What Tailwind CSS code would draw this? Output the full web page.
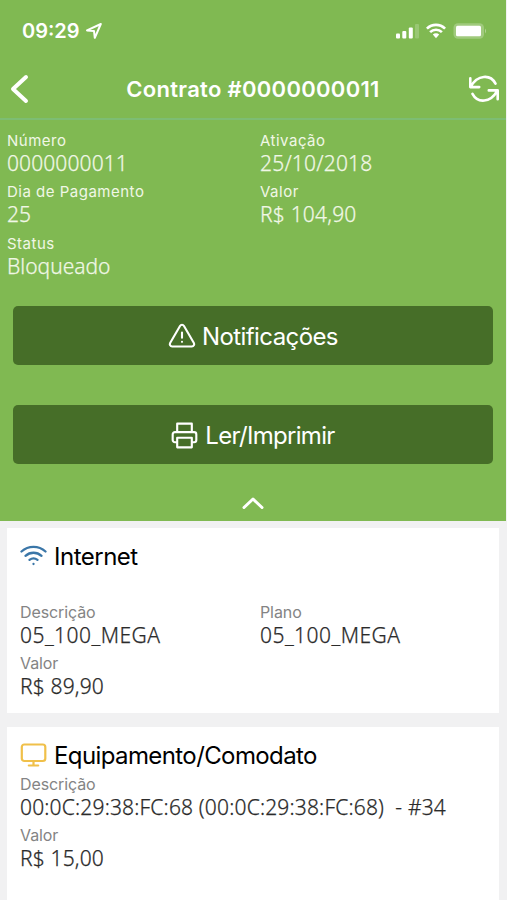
<!DOCTYPE html>
<html lang="pt-BR">
<head>
    <meta charset="UTF-8">
    <meta name="viewport" content="width=device-width, initial-scale=1.0">
    <title>Contrato #0000000011</title>
    <script src="https://cdn.jsdelivr.net/npm/@tailwindcss/browser@4"></script>
</head>
<body class="bg-[#f1f1f2] h-screen overflow-hidden flex flex-col font-['Inter','Liberation_Sans',sans-serif] whitespace-nowrap">
    <div class="bg-[#80b952] text-white w-[506px] h-[521px] shrink-0 flex flex-col">
        <!-- Status bar -->
        <div class="h-[60px] pt-0.5 pl-[22px] pr-[19px] flex items-center justify-between">
            <div class="flex items-center gap-1.5">
                <span class="text-[20px] font-semibold">09:29</span>
                <svg class="w-4 h-4" viewBox="0 0 16 16" fill="none" stroke="currentColor" stroke-width="2" stroke-linejoin="round"><path d="M1 7.4 14.8 1 8.8 14.8 8 8z"/></svg>
            </div>
            <div class="flex items-center gap-[7px]">
                <svg class="w-[23px] h-4" viewBox="0 0 23 16" fill="currentColor">
                    <rect x="0" y="10.5" width="4" height="5" rx="1"/>
                    <rect x="6.3" y="8" width="4" height="7.5" rx="1"/>
                    <rect x="12.8" y="4.5" width="4" height="11" rx="1"/>
                    <rect x="19" y="1" width="4" height="14.5" rx="1" opacity=".2"/>
                </svg>
                <svg class="w-5 h-4" viewBox="0 0 20 16" fill="none" stroke="currentColor" stroke-width="2.6">
                    <path d="M.9 5.6a13 13 0 0 1 18.2 0M4.1 9.1a8.4 8.4 0 0 1 11.8 0"/>
                    <path d="M6.8 11.6a4.6 4.6 0 0 1 6.4 0L10 15.2z" fill="currentColor" stroke="none"/>
                </svg>
                <svg class="w-[34px] h-4" viewBox="0 0 34 16" fill="currentColor">
                    <rect x="0.5" y="0.3" width="30.5" height="15.4" rx="4.5" opacity=".25"/>
                    <rect x="3" y="2.8" width="25" height="10.4" rx="1.5"/>
                    <path d="M32 5.5q2 2.5 0 5z" opacity=".4"/>
                </svg>
            </div>
        </div>

        <!-- Title bar -->
        <header class="h-[60px] border-b-2 border-[#7dbd73] pl-[10px] pr-[6px] flex items-center justify-between">
            <svg class="w-[19px] h-[30px]" viewBox="0 0 19 30" fill="none" stroke="currentColor" stroke-width="4" stroke-linecap="round" stroke-linejoin="round"><path d="M16 3 3 15l13 12"/></svg>
            <h1 class="text-[22px] font-semibold tracking-[0.3px] pl-[9px]">Contrato #0000000011</h1>
            <svg class="w-[32px] h-[28px]" viewBox="0 0 32 28" fill="none" stroke="currentColor" stroke-width="2.6" stroke-linecap="round" stroke-linejoin="round">
                <path d="M2.3 3.3v8.8h8.9M2.8 11.6C9.5-.5 22.5-1 27.5 8.6M29.7 24.2v-8.8h-8.9M29.2 15.9C22.5 28 9.5 28.5 4.5 18.9"/>
            </svg>
        </header>

        <!-- Contract data -->
        <dl class="grid grid-cols-[253px_1fr] auto-rows-[51.3px] pt-[11px] pl-[7px] text-[#f0f7e6]">
            <div>
                <dt class="text-[15px] leading-5 tracking-[0.5px]">Número</dt>
                <dd class="text-[21px] leading-[25px] tracking-[0.1px] font-light font-['Noto_Sans',sans-serif] [-webkit-text-stroke:0.25px]">0000000011</dd>
            </div>
            <div>
                <dt class="text-[15px] leading-5 tracking-[0.5px]">Ativação</dt>
                <dd class="text-[21px] leading-[25px] tracking-[0.2px] font-light font-['Noto_Sans',sans-serif] [-webkit-text-stroke:0.25px]">25/10/2018</dd>
            </div>
            <div>
                <dt class="text-[15px] leading-5 tracking-[0.5px]">Dia de Pagamento</dt>
                <dd class="text-[21px] leading-[25px] font-light font-['Noto_Sans',sans-serif] [-webkit-text-stroke:0.25px]">25</dd>
            </div>
            <div>
                <dt class="text-[15px] leading-5 tracking-[0.5px]">Valor</dt>
                <dd class="text-[21px] leading-[25px] tracking-[0.2px] font-light font-['Noto_Sans',sans-serif] [-webkit-text-stroke:0.25px]">R$ 104,90</dd>
            </div>
            <div>
                <dt class="text-[15px] leading-5 tracking-[0.5px]">Status</dt>
                <dd class="text-[21px] leading-[25px] font-light font-['Noto_Sans',sans-serif] [-webkit-text-stroke:0.25px]">Bloqueado</dd>
            </div>
        </dl>

        <!-- Actions -->
        <div class="flex flex-col gap-10 pt-[21px] px-[13px]">
            <button class="h-[59px] pt-[3px] bg-[#466e28] rounded-[5px] flex items-center justify-center gap-[6px] text-[24px] tracking-[-0.6px]">
                <svg class="w-[28px] h-[28px] mb-0.5" viewBox="0 0 24 24" fill="none" stroke="currentColor" stroke-width="1.8" stroke-linecap="round" stroke-linejoin="round"><path d="M10.29 3.36 1.82 18a2 2 0 0 0 1.71 3h16.94a2 2 0 0 0 1.71-3L13.71 3.36a2 2 0 0 0-3.42 0zM12 9v4.5M12 17h.01"/></svg>
                <span>Notificações</span>
            </button>
            <button class="h-[59px] pt-[3px] bg-[#466e28] rounded-[5px] flex items-center justify-center gap-[7px] text-[24px] tracking-[-0.7px]">
                <svg class="w-[27px] h-[27px]" viewBox="0 0 24 24" fill="none" stroke="currentColor" stroke-width="1.9" stroke-linecap="round" stroke-linejoin="round"><path d="M5.5 9V1.5h13V9M5.5 18H3.5a2 2 0 0 1-2-2v-5a2 2 0 0 1 2-2h17a2 2 0 0 1 2 2v5a2 2 0 0 1-2 2h-2M5.5 14h13v8.5h-13z"/></svg>
                <span>Ler/Imprimir</span>
            </button>
        </div>
        <svg class="w-[22px] h-[14px] mt-[32px] ml-[242px]" viewBox="0 0 22 14" fill="none" stroke="currentColor" stroke-width="3" stroke-linecap="round" stroke-linejoin="round"><path d="M2 11.5 11 3l9 8.5"/></svg>
    </div>

    <main class="pt-[7px] pl-[7px] pr-[8px] flex flex-col gap-[14px]">
        <section class="bg-white h-[185px] shrink-0 pt-[11px] pl-[13px]">
            <h2 class="flex items-center gap-[7px] h-[34px] text-[24px] tracking-[-0.5px] text-black">
                <svg class="w-[27px] h-[22px]" viewBox="0 0 27 22" fill="none" stroke="#3a76a8" stroke-width="2.3" stroke-linecap="round"><path d="M1.5 6.5a18 18 0 0 1 24 0M5.5 10.8a12 12 0 0 1 16 0M9.5 14.9a6.5 6.5 0 0 1 8 0M13.5 19h.01"/></svg>
                <span class="pt-0.5">Internet</span>
            </h2>
            <dl class="grid grid-cols-[240px_1fr] auto-rows-[51.3px] pt-[29px] text-[#2b2b2b]">
                <div>
                    <dt class="text-[16px] leading-5 tracking-[-0.1px] text-[#848484]">Descrição</dt>
                    <dd class="text-[21px] leading-[27px] tracking-[0.45px] font-light font-['Noto_Sans',sans-serif] [-webkit-text-stroke:0.25px]">05_100_MEGA</dd>
                </div>
                <div>
                    <dt class="text-[16px] leading-5 tracking-[-0.1px] text-[#848484]">Plano</dt>
                    <dd class="text-[21px] leading-[27px] tracking-[0.45px] font-light font-['Noto_Sans',sans-serif] [-webkit-text-stroke:0.25px]">05_100_MEGA</dd>
                </div>
                <div>
                    <dt class="text-[16px] leading-5 tracking-[-0.1px] text-[#848484]">Valor</dt>
                    <dd class="text-[21px] leading-[27px] tracking-[0.15px] font-light font-['Noto_Sans',sans-serif] [-webkit-text-stroke:0.25px]">R$ 89,90</dd>
                </div>
            </dl>
        </section>

        <section class="bg-white h-[185px] shrink-0 pt-[11px] pl-[13px]">
            <h2 class="flex items-center gap-[7px] h-[34px] text-[24px] tracking-[-0.6px] text-black">
                <svg class="w-[27px] h-[24px]" viewBox="0 0 27 24" fill="none" stroke="#f0c04a" stroke-width="2.2" stroke-linecap="round" stroke-linejoin="round"><rect x="1.8" y="1.5" width="23.5" height="16.5" rx="2.5"/><path d="M13.5 18v4.5M8.8 22.5h9.4"/></svg>
                <span class="pt-0.5">Equipamento/Comodato</span>
            </h2>
            <dl class="grid auto-rows-[51.3px] pt-[2px] text-[#2b2b2b]">
                <div>
                    <dt class="text-[16px] leading-5 tracking-[-0.1px] text-[#848484]">Descrição</dt>
                    <dd class="text-[21px] leading-[27px] tracking-[0.17px] font-light font-['Noto_Sans',sans-serif] [-webkit-text-stroke:0.25px]">00:0C:29:38:FC:68 (00:0C:29:38:FC:68)&nbsp; - #34</dd>
                </div>
                <div>
                    <dt class="text-[16px] leading-5 tracking-[-0.1px] text-[#848484]">Valor</dt>
                    <dd class="text-[21px] leading-[27px] tracking-[0.15px] font-light font-['Noto_Sans',sans-serif] [-webkit-text-stroke:0.25px]">R$ 15,00</dd>
                </div>
            </dl>
        </section>
    </main>
</body>
</html>
